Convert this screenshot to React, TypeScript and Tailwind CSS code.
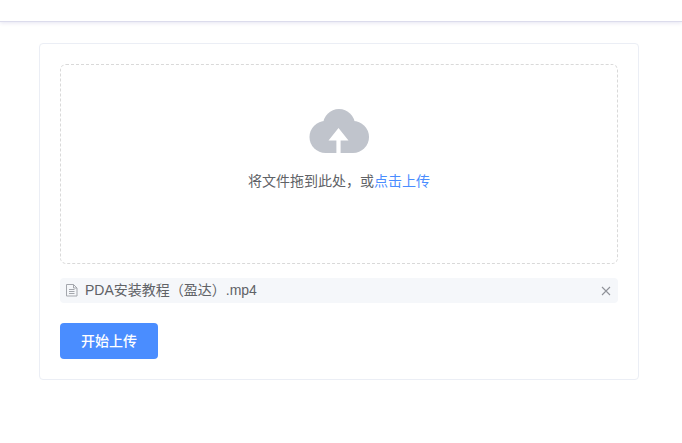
// Upload page: drag area, selected file row and start button

function CloudIcon() {
  return (
    <svg width="60" height="44" viewBox="0 0 60 44" className="block">
      <g fill="#c0c4cc">
        <circle cx="30" cy="16" r="16" />
        <circle cx="16.500" cy="28" r="16" />
        <circle cx="44" cy="28" r="16" />
        <rect x="16" y="14" width="28" height="30" />
      </g>
      <path d="M29.500 19 19.500 31.500h7.900V44h4.200V31.500h7.900Z" fill="#ffffff" />
    </svg>
  );
}

function FileIcon() {
  return (
    <svg width="14" height="14" viewBox="0 0 14 14" fill="none" stroke="#a4a7ad" strokeWidth="1" className="block -mt-[2px]">
      <path d="M1.500 1.500h7l3.500 3.500v8h-10.500Z" />
      <path d="M8.500 1.500v3.500h3.500M4 6.500h5.500M4 8.500h5.500M4 10.500h5.500" />
    </svg>
  );
}

function CloseIcon() {
  return (
    <svg width="12" height="12" viewBox="0 0 12 12" stroke="#909399" strokeWidth="1.100" className="block">
      <path d="M2 2l8 8M10 2l-8 8" />
    </svg>
  );
}

export default function App() {
  return (
    <div className="min-h-[443px] bg-white font-['Liberation_Sans','Noto_Sans_CJK_SC',sans-serif]">
      <div className="h-[22px] bg-white border-b border-[#dcdcec] shadow-[0_1px_4px_rgba(40,30,140,0.12)]" />
      <div className="pl-[39px] pt-[21px]">
        <div className="w-[600px] h-[337px] bg-white border border-[#ebeef5] rounded p-5">
          <div className="h-[200px] w-[558px] border border-dashed border-[#d9d9d9] rounded-md flex flex-col items-center pt-11">
            <CloudIcon />
            <div className="mt-[16px] text-[14px] leading-[24px] text-[#606266]">
              将文件拖到此处，或<span className="text-[#4a8dff]">点击上传</span>
            </div>
          </div>
          <div className="mt-[14px] h-[25px] w-[558px] bg-[#f5f7fa] rounded flex items-center justify-between pl-[5px] pr-[6px]">
            <div className="flex items-center text-[14px] text-[#606266]">
              <FileIcon />
              <span className="ml-[6px]">PDA安装教程（盈达）.mp4</span>
            </div>
            <CloseIcon />
          </div>
          <button className="mt-5 block w-[98px] h-9 bg-[#4a8dff] rounded text-white text-[14px] font-medium">
            开始上传
          </button>
        </div>
      </div>
    </div>
  );
}
